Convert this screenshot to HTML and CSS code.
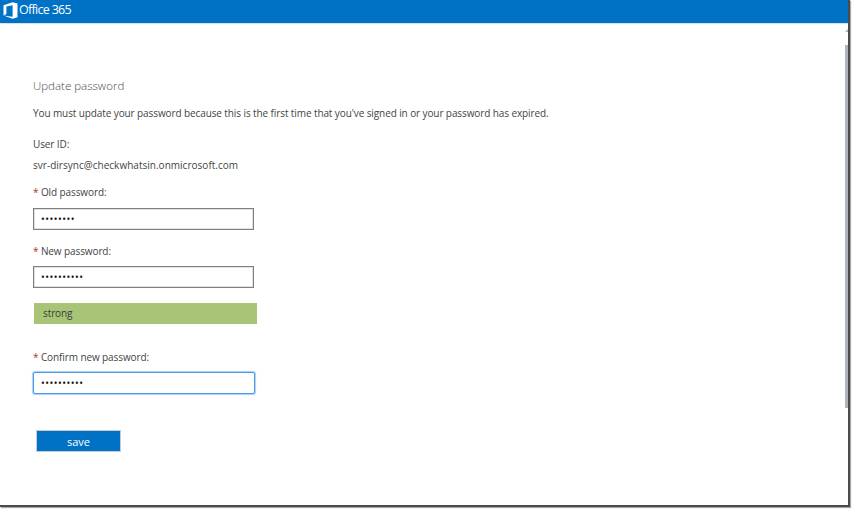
FILE: index.html
```html
<!DOCTYPE html>
<html lang="en">
<head>
<meta charset="utf-8">
<title>Update password</title>
<link rel="stylesheet" href="styles.css">
</head>
<body>
<div class="window">
  <header class="topbar">
    <svg class="logo" width="15" height="17" viewBox="0 0 15 17" aria-hidden="true">
      <path fill="#fff" d="M0.5 3.2 9.6 0.2 14.5 1.6V15.2L9.6 16.8 0.5 13.6 9.6 14.8V3.3L3.4 4.6V11.9L0.5 13.6Z"/>
    </svg>
    <span class="brand">Office 365</span>
  </header>
  <main class="content">
    <h1 class="title">Update password</h1>
    <p class="intro">You must update your password because this is the first time that you've signed in or your password has expired.</p>
    <p class="userlabel">User ID:</p>
    <p class="userid">svr-dirsync@checkwhatsin.onmicrosoft.com</p>
    <label class="label"><span class="star">*</span> Old password:</label>
    <div class="input"><span class="dots">••••••••</span></div>
    <label class="label label-new"><span class="star">*</span> New password:</label>
    <div class="input input-tight"><span class="dots">••••••••••</span></div>
    <div class="meter">strong</div>
    <label class="label label-confirm"><span class="star">*</span> Confirm new password:</label>
    <div class="input input-focus"><span class="dots">••••••••••</span></div>
    <button class="save" type="button">save</button>
  </main>
  <div class="scroll-arrow"></div>
  <div class="scroll-thumb"></div>
</div>
</body>
</html>
```
FILE: styles.css
```css
html, body {
  margin: 0;
  padding: 0;
  background: #fff;
}
body {
  width: 852px;
  height: 510px;
  overflow: hidden;
  font-family: "Open Sans", "Noto Sans", sans-serif;
  color: #444;
}
.window {
  position: relative;
  box-sizing: border-box;
  width: 850px;
  height: 507px;
  background: #fff;
  border-right: 2px solid #4a4a4a;
  border-bottom: 2px solid #4a4a4a;
  box-shadow: 1px 1px 1px #aaa;
}
.topbar {
  display: flex;
  align-items: center;
  height: 23px;
  padding-left: 3px;
  background: #0072c6;
  border-bottom: 1px solid #cfe3f3;
}
.logo {
  margin-right: 1px;
  margin-top: -3px;
}
.brand {
  color: #fff;
  font-size: 12.5px;
  letter-spacing: -0.7px;
  margin-top: -5px;
}
.content {
  padding: 53px 0 0 33px;
  font-size: 10px;
  letter-spacing: -0.1px;
}
.title {
  margin: 0;
  font-size: 11.5px;
  font-weight: 300;
  letter-spacing: 0;
  line-height: 17px;
  color: #4a4a4a;
}
.intro {
  margin: 12px 0 0;
  line-height: 14px;
  white-space: nowrap;
}
.userlabel {
  margin: 17px 0 0;
  line-height: 14px;
}
.userid {
  margin: 7px 0 0;
  line-height: 14px;
  letter-spacing: 0.02px;
}
.label {
  display: block;
  margin-top: 13px;
  line-height: 14px;
}
.label-new {
  margin-top: 14px;
}
.label-confirm {
  margin-top: 26px;
}
.star {
  color: #a33;
}
.input {
  display: flex;
  align-items: center;
  box-sizing: border-box;
  width: 221px;
  height: 22px;
  margin-top: 9px;
  padding-left: 7px;
  background: #fff;
  border: 1px solid #808080;
  box-shadow: inset 0 0 0 0.5px #c4c4c4;
}
.input-tight {
  margin-top: 8px;
}
.input-focus {
  width: 222px;
  margin-top: 8px;
  border: 1px solid #4a9ae8;
  border-radius: 2px;
  box-shadow: 0 0 1px 1px #a8d0f5;
}
.dots {
  font-size: 10px;
  letter-spacing: 0.5px;
  color: #111;
  margin-top: -1px;
}
.meter {
  box-sizing: border-box;
  width: 223px;
  height: 21px;
  margin: 15px 0 0 1px;
  padding-left: 9px;
  line-height: 21px;
  background: #a8c476;
  color: #3c3c3c;
}
.save {
  display: block;
  width: 85px;
  height: 22px;
  margin: 36px 0 0 3px;
  padding: 0;
  border: 1px solid #c6ccd2;
  background: #0072c6;
  color: #fff;
  font-family: inherit;
  font-size: 11px;
}
.scroll-arrow {
  position: absolute;
  top: 29px;
  right: 0;
  width: 0;
  height: 0;
  border-left: 3px solid transparent;
  border-bottom: 3px solid #aeb4bb;
}
.scroll-thumb {
  position: absolute;
  top: 45px;
  right: 0;
  width: 3px;
  height: 363px;
  background: #aeb4bb;
}
```
